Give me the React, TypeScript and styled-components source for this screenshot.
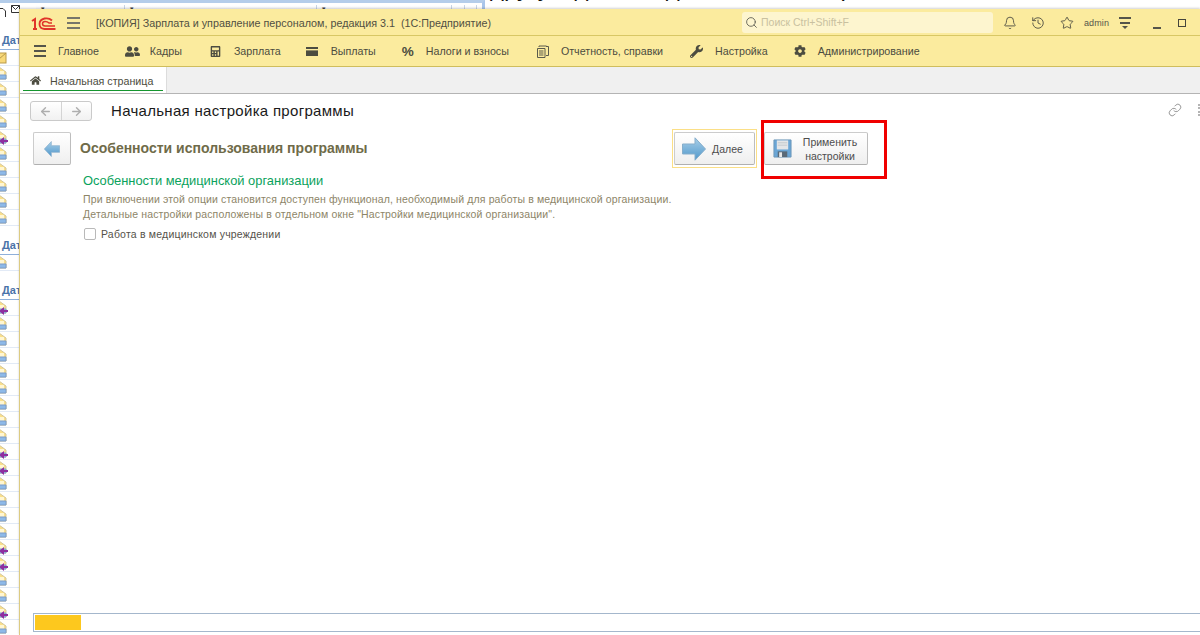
import styled, { createGlobalStyle } from "styled-components";
import { ArrowLeft, ArrowRight, Bell, History, Link, Search, Star } from "lucide-react";
import { FaCalculator, FaCog, FaHome, FaUserFriends, FaWrench } from "react-icons/fa";

const GlobalStyle = createGlobalStyle`
  html, body {
    margin: 0;
    padding: 0;
    background: #fff;
    font-family: "Liberation Sans", Arial, sans-serif;
  }
`;

const Desktop = styled.div`
  position: relative;
  width: 1200px;
  height: 635px;
  overflow: hidden;
  background: #fff;
`;

/* mail client that sits behind the 1C window */
const MailWindow = styled.div`
  position: absolute;
  left: 0;
  top: 0;
  width: 485px;
  height: 635px;
  border-top: 3px solid #b4cdea;
  border-right: 3px solid #a9c5ea;
  box-sizing: border-box;
`;

const MailToolbar = styled.div`
  display: flex;
  align-items: flex-start;
  height: 12px;
  padding-top: 2px;
`;

const MailColumn = styled.div<{ $width: number }>`
  width: ${({ $width }) => $width}px;
  height: 10px;
  flex: none;
  display: flex;
  font-size: 7px;
  color: #444;
  padding-left: 5px;
  box-sizing: border-box;
  border-right: 1px solid #c8d4e4;
  background: linear-gradient(#fff, #eef3fa);
`;

const MailTools = styled.div`
  width: 36px;
  height: 12px;
  flex: none;
  display: flex;
  align-items: flex-start;
  gap: 5px;
`;

const MailList = styled.div`
  width: 20px;
  overflow: hidden;
  display: flex;
  flex-direction: column;
  padding-top: 15px;
`;

const MailHeader = styled.div`
  height: 17px;
  flex: none;
  padding-left: 2px;
  font-size: 11px;
  font-weight: bold;
  line-height: 16px;
  color: #4a72a8;
  white-space: nowrap;
  border-bottom: 1px solid #8fb0da;
`;

const MailRow = styled.div`
  height: 16px;
  flex: none;
  box-sizing: border-box;
  border-bottom: 1px solid #e2eaf6;
  display: flex;
  align-items: center;
`;

const MailGap = styled.div<{ $height: number }>`
  height: ${({ $height }) => $height}px;
  flex: none;
`;

const MailGlyph = styled.svg`
  width: 16px;
  height: 15px;
  margin-left: -9px;
  flex: none;
  overflow: visible;
`;

const DocumentLine = styled.div`
  position: absolute;
  left: 490px;
  top: -25px;
  font-size: 24px;
  line-height: 26px;
  color: #111;
  white-space: nowrap;
`;

/* 1C window */
const AppWindow = styled.div`
  position: absolute;
  left: 19px;
  top: 9px;
  right: 0;
  bottom: 0;
  display: flex;
  flex-direction: column;
  background: #fff;
  border-left: 1px solid #dccb82;
  box-shadow: 0 -1px 2px rgba(0, 0, 0, 0.18);
  color: #4d4d40;
`;

const TitleBar = styled.div`
  height: 27px;
  flex: none;
  box-sizing: border-box;
  display: flex;
  align-items: center;
  background: #fbeb9e;
  border-bottom: 1px solid #d8c765;
  padding: 2px 0 0 11px;
  font-size: 10.75px;
`;

const Logo = styled.svg`
  width: 25px;
  height: 13px;
  flex: none;
`;

const Burger = styled.div<{ $width: number; $shrink?: boolean }>`
  width: ${({ $width }) => $width}px;
  flex: none;
  display: flex;
  flex-direction: column;
  align-items: center;
  gap: 3px;
  span {
    display: block;
    height: 2px;
    width: 100%;
    background: #55554a;
  }
  span:nth-child(2) {
    width: ${({ $shrink }) => ($shrink ? "80%" : "100%")};
  }
`;

const TitleBurger = styled(Burger)`
  margin-left: 11px;
  span {
    background: #77766a;
  }
`;

const WindowTitle = styled.div`
  margin-left: 16px;
  width: 646px;
  flex: none;
  white-space: pre;
  color: #504f42;
`;

const SearchBox = styled.div`
  width: 251px;
  height: 21px;
  flex: none;
  display: flex;
  align-items: center;
  gap: 3px;
  box-sizing: border-box;
  margin-top: -2px;
  padding-left: 3px;
  background: #fdf5cf;
  border-radius: 3px;
  color: #c9c1a0;
  font-size: 10.5px;
  svg {
    color: #5a5a50;
  }
`;

const TitleActions = styled.div`
  display: flex;
  align-items: center;
  margin-left: 10px;
  color: #4a4a40;
`;

const ActionIcon = styled.div<{ $width: number }>`
  width: ${({ $width }) => $width}px;
  flex: none;
  display: flex;
  justify-content: flex-start;
`;

const UserName = styled.div`
  width: 35px;
  flex: none;
  font-size: 9px;
  letter-spacing: 0.1px;
  color: #55554a;
`;

const Caret = styled.div`
  width: 0;
  height: 0;
  margin-top: -1px;
  border-left: 3px solid transparent;
  border-right: 3px solid transparent;
  border-top: 3px solid #55554a;
`;

const Minimize = styled.div`
  width: 8px;
  height: 2px;
  margin: 10px 0 0 22px;
  background: #55554a;
  flex: none;
`;

const Maximize = styled.div`
  width: 8px;
  height: 8px;
  box-sizing: border-box;
  margin-left: 17px;
  border: 1px solid #45453c;
  flex: none;
`;

const MenuBar = styled.nav`
  height: 30px;
  flex: none;
  display: flex;
  align-items: center;
  background: #fbeb9e;
  border-bottom: 1px solid #cfbd5d;
  padding-left: 14px;
`;

const MenuItem = styled.div<{ $iconWidth: number; $gap: number; $next: number }>`
  display: flex;
  align-items: center;
  gap: ${({ $gap }) => $gap}px;
  margin-right: ${({ $next }) => $next}px;
  font-size: 10.7px;
  color: #4c4c40;
  white-space: nowrap;
  > :first-child {
    width: ${({ $iconWidth }) => $iconWidth}px;
    flex: none;
  }
`;

const PercentMark = styled.span`
  font-size: 13.5px;
  font-weight: bold;
  color: #4c4c40;
`;

const TabBar = styled.div`
  height: 26px;
  flex: none;
  display: flex;
  background: #f0f0f0;
  border-bottom: 1px solid #b4b4b4;
`;

const Tab = styled.div`
  width: 147px;
  box-sizing: border-box;
  display: flex;
  align-items: center;
  gap: 9px;
  padding: 1px 0 0 10px;
  position: relative;
  background: #fff;
  border-right: 1px solid #dcdcdc;
  font-size: 10.7px;
  color: #4c4c40;
  &::after {
    content: "";
    position: absolute;
    left: 3px;
    right: 3px;
    bottom: 2px;
    height: 1.5px;
    background: #15962e;
  }
`;

const Body = styled.main`
  flex: 1;
  min-height: 0;
  display: flex;
  flex-direction: column;
`;

const PageHead = styled.div`
  display: flex;
  align-items: center;
  height: 20px;
  margin-top: 7px;
  padding-left: 10px;
`;

const NavGroup = styled.div`
  width: 62px;
  height: 20px;
  flex: none;
  box-sizing: border-box;
  display: flex;
  border: 1px solid #cacaca;
  border-radius: 3px;
  background: linear-gradient(#fff, #f1f1f1);
`;

const NavButton = styled.div<{ $divided?: boolean }>`
  flex: 1;
  display: flex;
  align-items: center;
  justify-content: center;
  color: #aeaeae;
  border-right: ${({ $divided }) => ($divided ? "1px solid #d4d4d4" : "none")};
`;

const PageTitle = styled.h1`
  margin: 0 0 0 19px;
  padding-bottom: 2px;
  flex: 1;
  font-size: 15px;
  font-weight: normal;
  letter-spacing: 0.3px;
  color: #1a1a1a;
`;

const LinkIcon = styled.div`
  display: flex;
  margin: -3px 16px 0 0;
  color: #8a8a8a;
`;

const MoreDots = styled.div`
  width: 0;
  height: 12px;
  margin-top: -3px;
  border-left: 2px dotted #b4b4b4;
`;

const WizardRow = styled.div`
  display: flex;
  align-items: center;
  width: 835px;
  height: 39px;
  margin: 8px 0 0 13px;
`;

const CommandButton = styled.button<{ $width?: number; $start?: boolean }>`
  height: 33px;
  width: ${({ $width }) => $width}px;
  flex: none;
  box-sizing: border-box;
  padding: ${({ $start }) => ($start ? "0 0 0 8px" : "0")};
  display: flex;
  align-items: center;
  justify-content: ${({ $start }) => ($start ? "flex-start" : "center")};
  background: linear-gradient(#fff, #efefef);
  border: 1px solid #cccccc;
  border-bottom-color: #b0b0b0;
  border-right-color: #bdbdbd;
  border-radius: 2px;
  font-family: inherit;
  font-size: 10.5px;
  color: #4d4d4d;
`;

const WizardTitle = styled.h2`
  margin: 0 0 0 9px;
  padding-bottom: 1px;
  flex: 1;
  font-size: 14px;
  font-weight: bold;
  color: #6f6b49;
`;

const FocusFrame = styled.div`
  width: 85px;
  height: 39px;
  flex: none;
  box-sizing: border-box;
  display: flex;
  align-items: center;
  justify-content: center;
  border: 1px solid #fbdf86;
`;

const NextLabel = styled.span`
  margin: 0 4px 0 6px;
`;

const ApplyHolder = styled.div`
  position: relative;
  margin-left: 7px;
  flex: none;
  display: flex;
`;

const ApplyLabel = styled.span`
  width: 68px;
  margin-left: 4px;
  line-height: 14px;
  text-align: center;
`;

const Callout = styled.div`
  position: absolute;
  left: -3px;
  top: -12px;
  width: 126px;
  height: 59px;
  box-sizing: border-box;
  border: 3px solid #f00000;
`;

const Section = styled.section`
  margin: 5px 0 0 63px;
`;

const SectionTitle = styled.h3`
  margin: 0;
  font-size: 12.9px;
  line-height: 16px;
  font-weight: normal;
  color: #0aa25c;
`;

const Hint = styled.p`
  margin: 3px 0 0;
  font-size: 10.5px;
  line-height: 15px;
  letter-spacing: 0.14px;
  color: #8d8568;
`;

const CheckRow = styled.label`
  display: flex;
  align-items: center;
  gap: 5px;
  margin: 6px 0 0 1px;
  font-size: 10.5px;
  letter-spacing: 0.2px;
  color: #55524a;
`;

const CheckBox = styled.span`
  width: 12px;
  height: 12px;
  box-sizing: border-box;
  border: 1px solid #b9b9b9;
  border-radius: 2px;
  background: #fff;
`;

const Progress = styled.div`
  margin: auto -4px 3px 13px;
  height: 19px;
  flex: none;
  box-sizing: border-box;
  padding: 1px;
  background: #fff;
  border: 1px solid #a4b7cc;
`;

const ProgressFill = styled.div`
  height: 100%;
  background: #fdc81e;
`;

const rowKinds = {
  first: ["closed", "open", "open", "open", "open", "reply", "open", "open", "open", "open", "open"],
  third: [
    "reply", "open", "open", "open", "open", "open", "open", "open", "open",
    "reply", "reply", "open", "open", "open", "open", "reply", "reply", "open", "open", "reply", "open",
  ],
};

const MailIcon = ({ kind }: { kind: string }) => (
  <MailGlyph viewBox="0 0 16 15">
    {kind === "closed" ? (
      <>
        <rect x="1" y="3" width="14" height="10" fill="#f8d878" stroke="#b99a4a" />
        <path d="M1 3l7 6 7-6" fill="none" stroke="#b99a4a" />
      </>
    ) : (
      <>
        <path d="M1 6l7-5 7 5v7H1z" fill="#fbe08a" stroke="#d4c79c" />
        <rect x="3" y="5" width="10" height="4" fill="#fff6d2" />
        <path d="M1 9h14v4H1z" fill="#8db9e8" stroke="#7d9cc8" />
      </>
    )}
    {kind === "reply" && <path d="M17 10h-4V7L8 11l5 4v-3h4z" fill="#8e2fa0" />}
  </MailGlyph>
);

const BigArrow = ({ flip, size }: { flip?: boolean; size: number }) => (
  <svg width={size} height={size} viewBox="0 0 24 24" style={flip ? { transform: "scaleX(-1)" } : undefined}>
    <defs>
      <linearGradient id="arrowFill" x1="0" y1="0" x2="0" y2="1">
        <stop offset="0" stopColor="#a9cfe8" />
        <stop offset="1" stopColor="#4f97cb" />
      </linearGradient>
    </defs>
    <path d="M.5 7H13V.8L23.500 12 13 23.200V17H.5z" fill="url(#arrowFill)" stroke="#86aecb" />
  </svg>
);

const SaveIcon = () => (
  <svg width="19" height="19" viewBox="0 0 20 20">
    <path d="M1 1h18v18H1z" fill="#6aa6d6" stroke="#6b97b8" />
    <rect x="4" y="1.500" width="12" height="9.500" fill="#e4e6e8" />
    <path d="M5 4h10M5 6.500h10" stroke="#c4c8cc" />
    <rect x="5" y="13" width="10" height="6" fill="#5a6a78" />
    <rect x="6.500" y="14" width="3" height="5" fill="#e8e8e8" />
  </svg>
);

const App = () => (
  <Desktop>
    <GlobalStyle />
    <MailWindow>
      <MailToolbar>
        <MailTools>
          <svg width="6" height="9" viewBox="0 0 6 9" style={{ marginTop: 3 }}>
            <path d="M-4 .5h7l2.500 2.500v6" fill="#fff" stroke="#333" />
          </svg>
          <svg width="9" height="8" viewBox="0 0 9 8">
            <path d="M.5.5h8v7h-8zM.5.5l4 4 4-4" fill="#fff" stroke="#333" />
          </svg>
        </MailTools>
        <MailColumn $width={89}>▾</MailColumn>
        <MailColumn $width={192}>▾</MailColumn>
        <MailColumn $width={135}>▾</MailColumn>
        <MailColumn $width={13} />
        <MailColumn $width={12} />
      </MailToolbar>
      <MailList>
        <MailHeader>Дат</MailHeader>
        {rowKinds.first.map((kind, i) => (
          <MailRow key={i}>
            <MailIcon kind={kind} />
          </MailRow>
        ))}
        <MailGap $height={11} />
        <MailHeader>Дат</MailHeader>
        <MailRow>
          <MailIcon kind="open" />
        </MailRow>
        <MailGap $height={11} />
        <MailHeader>Дат</MailHeader>
        {rowKinds.third.map((kind, i) => (
          <MailRow key={i}>
            <MailIcon kind={kind} />
          </MailRow>
        ))}
      </MailList>
    </MailWindow>
    <DocumentLine>другую данные для изменения расчета</DocumentLine>

    <AppWindow>
      <TitleBar>
        <Logo viewBox="0 0 25 13">
          <path d="M1 4l3-2v10M2 12h4" fill="none" stroke="#e0342a" strokeWidth="2" />
          <path d="M21 3.500C19 1.500 16 1 13.500 1.500 10 2.300 8.500 4.500 8.500 7c0 2.500 1.500 4.700 5 5h11" fill="none" stroke="#e0342a" strokeWidth="1.800" />
          <path d="M24 9h-10c-1.500 0-2.500-1-2.500-2.200S12.500 4.500 14 4.500c2 0 3 .5 4 1.500h3" fill="none" stroke="#e0342a" strokeWidth="1.500" />
        </Logo>
        <TitleBurger $width={13}>
          <span />
          <span />
          <span />
        </TitleBurger>
        <WindowTitle>[КОПИЯ] Зарплата и управление персоналом, редакция 3.1  (1С:Предприятие)</WindowTitle>
        <SearchBox>
          <Search size={13} strokeWidth={1.6} />
          Поиск Ctrl+Shift+F
        </SearchBox>
        <TitleActions>
          <ActionIcon $width={28}>
            <Bell size={14} strokeWidth={1.5} />
          </ActionIcon>
          <ActionIcon $width={29}>
            <History size={14} strokeWidth={1.5} />
          </ActionIcon>
          <ActionIcon $width={24}>
            <Star size={14} strokeWidth={1.5} />
          </ActionIcon>
          <UserName>admin</UserName>
          <Burger $width={12} $shrink>
            <span />
            <span />
            <Caret />
          </Burger>
          <Minimize />
          <Maximize />
        </TitleActions>
      </TitleBar>

      <MenuBar>
        <MenuItem $iconWidth={12} $gap={12} $next={26}>
          <Burger $width={12}>
            <span />
            <span />
            <span />
          </Burger>
          Главное
        </MenuItem>
        <MenuItem $iconWidth={15} $gap={10} $next={28}>
          <FaUserFriends size={15} />
          Кадры
        </MenuItem>
        <MenuItem $iconWidth={11} $gap={13} $next={25}>
          <FaCalculator size={11} />
          Зарплата
        </MenuItem>
        <MenuItem $iconWidth={12} $gap={13} $next={26}>
          <svg width="12" height="9" viewBox="0 0 12 9">
            <path d="M0 0h12v9H0z" fill="#4c4c40" />
            <path d="M0 2h12v1.400H0z" fill="#fbeb9e" />
          </svg>
          Выплаты
        </MenuItem>
        <MenuItem $iconWidth={13} $gap={11} $next={28}>
          <PercentMark>%</PercentMark>
          Налоги и взносы
        </MenuItem>
        <MenuItem $iconWidth={12} $gap={12} $next={27}>
          <svg width="12" height="13" viewBox="0 0 12 13" fill="none" stroke="#5a5a4c">
            <path d="M.5 3.500h7.500v9H.5zM2 2V1h7.500v1M9.500 1.500H11.500v9H9" />
            <path d="M2 6h4.500M2 8h4.500M2 10h4.500" />
          </svg>
          Отчетность, справки
        </MenuItem>
        <MenuItem $iconWidth={13} $gap={12} $next={26}>
          <FaWrench size={13} />
          Настройка
        </MenuItem>
        <MenuItem $iconWidth={12} $gap={12} $next={0}>
          <FaCog size={12} />
          Администрирование
        </MenuItem>
      </MenuBar>

      <TabBar>
        <Tab>
          <FaHome size={11} />
          Начальная страница
        </Tab>
      </TabBar>

      <Body>
        <PageHead>
          <NavGroup>
            <NavButton $divided>
              <ArrowLeft size={13} strokeWidth={2.6} />
            </NavButton>
            <NavButton>
              <ArrowRight size={13} strokeWidth={2.6} />
            </NavButton>
          </NavGroup>
          <PageTitle>Начальная настройка программы</PageTitle>
          <LinkIcon>
            <Link size={14} strokeWidth={1.5} />
          </LinkIcon>
          <MoreDots />
        </PageHead>

        <WizardRow>
          <CommandButton $width={38}>
            <BigArrow flip size={16} />
          </CommandButton>
          <WizardTitle>Особенности использования программы</WizardTitle>
          <FocusFrame>
            <CommandButton $width={81}>
              <BigArrow size={24} />
              <NextLabel>Далее</NextLabel>
            </CommandButton>
          </FocusFrame>
          <ApplyHolder>
            <CommandButton $width={104} $start>
              <SaveIcon />
              <ApplyLabel>
                Применить
                <br />
                настройки
              </ApplyLabel>
            </CommandButton>
            <Callout />
          </ApplyHolder>
        </WizardRow>

        <Section>
          <SectionTitle>Особенности медицинской организации</SectionTitle>
          <Hint>
            При включении этой опции становится доступен функционал, необходимый для работы в медицинской организации.
            <br />
            Детальные настройки расположены в отдельном окне "Настройки медицинской организации".
          </Hint>
          <CheckRow>
            <CheckBox />
            Работа в медицинском учреждении
          </CheckRow>
        </Section>

        <Progress>
          <ProgressFill style={{ width: 46 }} />
        </Progress>
      </Body>
    </AppWindow>
  </Desktop>
);

export default App;
